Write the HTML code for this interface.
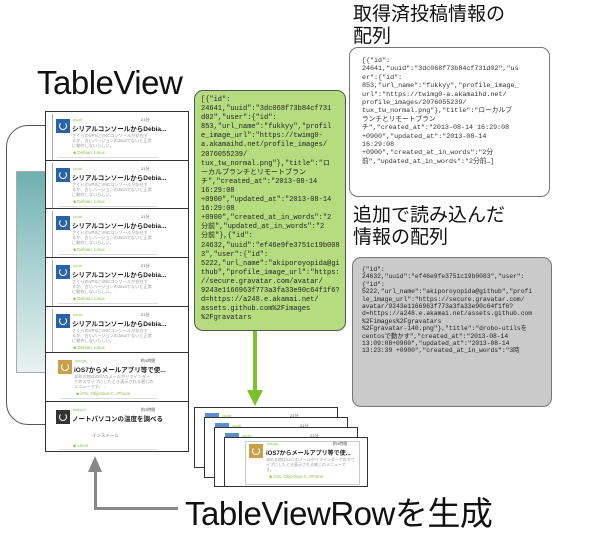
<!DOCTYPE html>
<html><head><meta charset="utf-8"><style>
*{margin:0;padding:0;box-sizing:border-box}
body{width:600px;height:550px;background:#fff;position:relative;overflow:hidden;font-family:"Liberation Sans","Noto Sans CJK JP",sans-serif}
.a{position:absolute}
.row{position:absolute;left:45px;width:144px;border:1.5px solid #333;background:#fff}
.av{position:absolute;left:10px;top:7px;width:14px;height:14px;background:#2a62a8}
.av:after{content:"";position:absolute;left:3px;top:3px;width:6px;height:6px;border:1.5px solid #fff;border-radius:50%;border-top-color:transparent}
.nm{position:absolute;left:27px;top:5px;font-size:4px;color:#8bc34a}
.tm{position:absolute;left:95px;top:5px;font-size:4px;color:#555}
.tt{position:absolute;left:26px;top:11px;font-size:6.5px;font-weight:bold;color:#222;white-space:nowrap}
.ds{position:absolute;left:26px;top:21px;font-size:4.2px;line-height:5px;color:#999;width:80px}
.tg{position:absolute;left:27px;top:38px;font-size:4.5px;color:#8bc34a}
.ln{position:absolute;left:6px;top:2px;width:1px;height:46px;background:#aaa}
.bt{position:absolute;left:12px;right:30px;top:45px;height:1px;background:#ddd}
pre{font-family:"Liberation Mono","Noto Sans CJK JP",monospace;white-space:pre}
.h{font-size:19px;line-height:22px;color:#111;font-family:"Liberation Sans","Noto Sans CJK JP",sans-serif}
</style></head><body>

<div class="a" style="left:37px;top:64px;font-size:33px;color:#111;letter-spacing:-0.5px">TableView</div>

<!-- phone -->
<div class="a" style="left:6px;top:125px;width:160px;height:300px;border:1px solid #555;border-radius:22px"></div>
<div class="a" style="left:16px;top:171px;width:142px;height:202px;border:1px solid #aaa;background:linear-gradient(180deg,#6fb0b0 0%,#a8d0d0 45%,#e8f2f2 100%)"></div>
<div class="a" style="left:74px;top:398px;width:26px;height:18px;border:1px solid #bbb;border-radius:4px"></div>

<div class="row" style="top:111px;height:51px"><div class="ln"></div><div class="av"></div><div class="nm">yuuki</div><div class="tm">21分</div><div class="tt">シリアルコンソールからDebia...</div><div class="ds">さくらのVPSにVNCコンソールが存在するが、古いバージョンのJavaでないと正常に動作しないらしい。</div><div class="tg">⬥ Debian, Linux</div><div class="bt"></div></div>
<div class="row" style="top:160px;height:50px"><div class="ln"></div><div class="av"></div><div class="nm">yuuki</div><div class="tm">21分</div><div class="tt">シリアルコンソールからDebia...</div><div class="ds">さくらのVPSにVNCコンソールが存在するが、古いバージョンのJavaでないと正常に動作しないらしい。</div><div class="tg">⬥ Debian, Linux</div><div class="bt"></div></div>
<div class="row" style="top:208px;height:51px"><div class="ln"></div><div class="av"></div><div class="nm">yuuki</div><div class="tm">21分</div><div class="tt">シリアルコンソールからDebia...</div><div class="ds">さくらのVPSにVNCコンソールが存在するが、古いバージョンのJavaでないと正常に動作しないらしい。</div><div class="tg">⬥ Debian, Linux</div><div class="bt"></div></div>
<div class="row" style="top:257px;height:51px"><div class="ln"></div><div class="av"></div><div class="nm">yuuki</div><div class="tm">21分</div><div class="tt">シリアルコンソールからDebia...</div><div class="ds">さくらのVPSにVNCコンソールが存在するが、古いバージョンのJavaでないと正常に動作しないらしい。</div><div class="tg">⬥ Debian, Linux</div><div class="bt"></div></div>
<div class="row" style="top:306px;height:48px"><div class="ln"></div><div class="av"></div><div class="nm">yuuki</div><div class="tm">21分</div><div class="tt">シリアルコンソールからDebia...</div><div class="ds">さくらのVPSにVNCコンソールが存在するが、古いバージョンのJavaでないと正常に動作しないらしい。</div><div class="tg">⬥ Debian, Linux</div><div class="bt"></div></div>
<div class="row" style="top:352px;height:51px"><div class="av" style="background:#c9a04a;left:12px"></div><div class="nm" style="left:29px">yuuga_</div><div class="tm">約4時間</div><div class="tt" style="left:28px">iOS7からメールアプリ等で使...</div><div class="ds" style="left:28px">求める物はiOS7のメールやリマインダーでのスワイプにしたとき表示される感じのメニューです。...</div><div class="tg" style="left:30px">⬥ iOS, Objective-C, iPhone</div><div class="bt" style="left:14px"></div></div>
<div class="row" style="top:401px;height:51px"><div class="av" style="background:#333;left:10px;top:8px"></div><div class="nm">tukiyo3</div><div class="tm">約2時間</div><div class="tt">ノートパソコンの温度を調べる</div><div class="a" style="left:46px;top:31px;font-size:4.5px;color:#777">インストール</div><div class="tg" style="top:41px">⬥ Linux</div><div class="bt" style="top:47px"></div></div>

<!-- green box -->
<div class="a" style="left:194px;top:90px;width:152px;height:241px;background:#b6dc80;border:1.5px solid #555;border-radius:9px"></div>
<pre class="a" style="left:201px;top:96px;font-size:7px;line-height:9.1px;color:#222">[{"id":
24641,"uuid":"3dc068f73b84cf731
d02","user":{"id":
853,"url_name":"fukkyy","profil
e_image_url":"https://twimg0-
a.akamaihd.net/profile_images/
2076055239/
tux_tw_normal.png"},"title":"ロ
ーカルブランチとリモートブラン
チ","created_at":"2013-08-14
16:29:08
+0900","updated_at":"2013-08-14
16:29:08
+0900","created_at_in_words":"2
分前","updated_at_in_words":"2
分前"},{"id":
24632,"uuid":"ef46e9fe3751c19b008
3","user":{"id":
5222,"url_name":"akiporoyopida@gi
thub","profile_image_url":"https:
//secure.gravatar.com/avatar/
9243e1166963f773a3fa33e90c64f1f6?
d=https://a248.e.akamai.net/
assets.github.com%2Fimages
%2Fgravatars</pre>
<div class="a" style="left:253px;top:331px;width:4px;height:62px;background:#7cc02e"></div>
<div class="a" style="left:247px;top:390px;width:0;height:0;border-left:8px solid transparent;border-right:8px solid transparent;border-top:16px solid #7cc02e"></div>

<!-- right top -->
<div class="a h" style="left:353px;top:4px">取得済投稿情報の<br>配列</div>
<div class="a" style="left:349px;top:47px;width:201px;height:150px;border:1px solid #777;border-radius:9px;background:#fff"></div>
<pre class="a" style="left:362px;top:57px;font-size:6.7px;line-height:8.4px;color:#333">[{"id":
24641,"uuid":"3dc068f73b84cf731d02","us
er":{"id":
853,"url_name":"fukkyy","profile_image_
url":"https://twimg0-a.akamaihd.net/
profile_images/2076055239/
tux_tw_normal.png"},"title":"ローカルブ
ランチとリモートブラン
チ","created_at":"2013-08-14 16:29:08
+0900","updated_at":"2013-08-14
16:29:08
+0900","created_at_in_words":"2分
前","updated_at_in_words":"2分前…]</pre>

<div class="a h" style="left:353px;top:205px">追加で読み込んだ<br>情報の配列</div>
<div class="a" style="left:352px;top:257px;width:200px;height:150px;border:1px solid #777;border-radius:9px;background:#cacaca"></div>
<pre class="a" style="left:362px;top:266px;font-size:6.3px;line-height:7.4px;color:#222">{"id":
24632,"uuid":"ef46e9fe3751c19b0083","user":
{"id":
5222,"url_name":"akiporoyopida@github","profi
le_image_url":"https://secure.gravatar.com/
avatar/9243e1166963f773a3fa33e90c64f1f6?
d=https://a248.e.akamai.net/assets.github.com
%2Fimages%2Fgravatars
%2Fgravatar-140.png"},"title":"drobo-utilsを
centosで動かす","created_at":"2013-08-14
13:09:08+0900","updated_at":"2013-08-14
13:23:39 +0900","created_at_in_words":"3時</pre>

<!-- stacked cards -->
<div class="row" style="left:194px;top:407px;width:144px;height:61px;border-width:1px"><div class="av" style="left:10px;top:5px;background:#5d8ec8"></div><div class="nm">yuuki</div><div class="tm">21分</div></div>
<div class="row" style="left:204px;top:417px;width:144px;height:61px;border-width:1px"><div class="av" style="left:10px;top:5px;background:#5d8ec8"></div><div class="nm">yuuki</div><div class="tm">21分</div></div>
<div class="row" style="left:214px;top:427px;width:144px;height:60px;border-width:1px"><div class="av" style="left:10px;top:5px;background:#5d8ec8"></div><div class="nm">yuuki</div><div class="tm">21分</div></div>
<div class="row" style="left:224px;top:437px;width:144px;height:50px;border-width:1px"><div class="a" style="left:20px;top:3px;width:115px;height:44px;border:1px solid #ccc;background:#fff"></div><div class="av" style="background:#c9a04a;left:24px;top:6px"></div><div class="nm" style="left:42px;top:3px">yuuga_</div><div class="tm" style="left:108px;top:3px">約4時間</div><div class="tt" style="left:41px;top:10px;font-size:6px">iOS7からメールアプリ等で使...</div><div class="ds" style="left:41px;top:19px;width:90px;font-size:4px">求める物はiOS7のメールやリマインダーでのスワイプにしたとき表示される感じのメニューです。...</div><div class="tg" style="left:44px;top:36px">⬥ iOS, Objective-C, iPhone</div></div>

<div class="a" style="left:185px;top:487px;font-size:33px;color:#111;letter-spacing:-0.5px;white-space:nowrap">TableViewRowを生成</div>

<!-- gray arrow -->
<div class="a" style="left:94px;top:507px;width:84px;height:3px;background:#888"></div>
<div class="a" style="left:94px;top:470px;width:3px;height:40px;background:#888"></div>
<div class="a" style="left:88px;top:456px;width:0;height:0;border-left:7px solid transparent;border-right:7px solid transparent;border-bottom:16px solid #888"></div>
</body></html>
